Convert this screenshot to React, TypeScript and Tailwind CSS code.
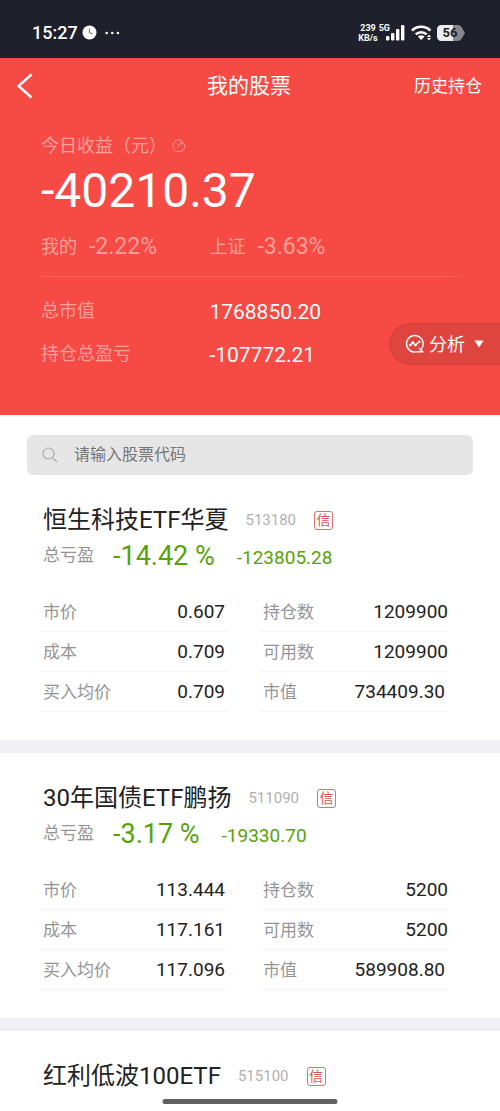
import React, { useState } from 'react';

type Holding = {
    name: string;
    code: string;
    percent?: string;
    profit?: string;
    left?: [string, string][];
    right?: [string, string][];
};

const holdings: Holding[] = [
    {
        name: '恒生科技ETF华夏',
        code: '513180',
        percent: '-14.42 %',
        profit: '-123805.28',
        left: [['市价', '0.607'], ['成本', '0.709'], ['买入均价', '0.709']],
        right: [['持仓数', '1209900'], ['可用数', '1209900'], ['市值', '734409.30']],
    },
    {
        name: '30年国债ETF鹏扬',
        code: '511090',
        percent: '-3.17 %',
        profit: '-19330.70',
        left: [['市价', '113.444'], ['成本', '117.161'], ['买入均价', '117.096']],
        right: [['持仓数', '5200'], ['可用数', '5200'], ['市值', '589908.80']],
    },
    { name: '红利低波100ETF', code: '515100' },
];

const StatusBar: React.FC = () => (
    <div className="flex h-[58px] items-center justify-between bg-[#1e212b] pt-[7px] pr-[35px] pl-8 text-white">
        <div className="flex items-center gap-2">
            <span className="text-[18px] leading-6 font-medium">15:27</span>
            <svg className="-ml-1" width="15" height="15" viewBox="0 0 15 15">
                <circle cx="7.5" cy="7.5" r="7" fill="#fff" />
                <path d="M7.3 3.6v4.2l3.3.7" fill="none" stroke="#666a74" strokeWidth="1" />
            </svg>
            <svg width="15" height="4" viewBox="0 0 15 4" fill="#fff">
                <circle cx="1.7" cy="2" r="1.3" />
                <circle cx="7.3" cy="2" r="1.3" />
                <circle cx="12.9" cy="2" r="1.3" />
            </svg>
        </div>
        <div className="flex items-center gap-[5px]">
            <div className="flex items-start">
                <div className="mr-px text-center text-[9px] leading-[10px] font-bold">
                    <div>239</div>
                    <div>KB/s</div>
                </div>
                <span className="text-[9px] leading-[10px] font-bold">5G</span>
                <svg className="-ml-1" width="20" height="20" viewBox="0 0 20 20" fill="#fff">
                    <rect x="0" y="13" width="3.4" height="4.500" rx="1" />
                    <rect x="5" y="10" width="3.4" height="7.500" rx="1" />
                    <rect x="10" y="6" width="3.4" height="11.500" rx="1" />
                    <rect x="15" y="2" width="3.4" height="15.500" rx="1" />
                </svg>
            </div>
            <svg width="21" height="16" viewBox="0 0 21 16">
                <g fill="none" stroke="#fff" strokeWidth="2.6">
                    <path d="M1 5.6a13 13 0 0 1 18.4 0" />
                    <path d="M4.7 9.4a8 8 0 0 1 11 0" />
                </g>
                <path d="M10.2 10.2a5 5 0 0 1 3.4 1.4L10.2 15l-3.4-3.4a5 5 0 0 1 3.4-1.4z" fill="#fff" />
                <path d="M16 12l2-2.4 2 2.4zM16 13l2 2.4 2-2.4z" fill="#fff" />
            </svg>
            <div className="relative h-4 w-7">
                <svg width="28" height="16" viewBox="0 0 28 16">
                    <path d="M5 0h16q2 0 3.4 2L28 8l-3.600 6q-1.400 2-3.400 2H5q-5 0-5-5V5q0-5 5-5z" fill="#85878c" />
                    <path d="M5 0h11v16H5q-5 0-5-5V5q0-5 5-5z" fill="#eceded" />
                </svg>
                <span className="absolute inset-0 pr-[2px] text-center text-[13px] leading-4 font-bold text-[#1e212b]">56</span>
            </div>
        </div>
    </div>
);

const Summary: React.FC = () => (
    <header className="relative bg-[#f64a45] pb-10 text-white">
        <div className="grid h-[55px] grid-cols-3 items-center pr-[18px] pl-4">
            <button type="button" aria-label="返回" className="justify-self-start">
                <svg width="18" height="26" viewBox="0 0 18 26" fill="none" stroke="#fff" strokeWidth="2.400">
                    <path d="M15.500 1.500L2.500 13l13 11.500" />
                </svg>
            </button>
            <h1 className="text-center text-[21px] leading-7">我的股票</h1>
            <a href="#history" className="justify-self-end text-[17px] leading-6">历史持仓</a>
        </div>

        <div className="pt-[19px] pr-[38px] pl-[41px]">
            <div className="flex h-7 items-center text-[18px] leading-7 text-[#fba09c]">
                今日收益（元）
                <svg className="ml-[5px]" width="14" height="14" viewBox="0 0 14 14" fill="none" stroke="#fba09c" strokeWidth="1">
                    <path d="M9.600 1.500A6 6 0 1 0 12.700 5.200" />
                    <path d="M5.800 8.400C6 5.800 7.600 4 10.800 3.600M9 2.200l2.300 1.300L10 5.700" />
                </svg>
            </div>
            <div className="mt-[5px] text-[48px] leading-[52px]">-40210.37</div>
            <div className="mt-4 grid grid-cols-[2fr_3fr] border-b border-[#f9605b] pb-[15px] text-[18px] leading-7 text-[#fba09c]">
                <div className="flex items-center gap-3">
                    我的<span className="text-[23px]">-2.22%</span>
                </div>
                <div className="flex items-center gap-3">
                    上证<span className="text-[23px]">-3.63%</span>
                </div>
            </div>
            <dl className="mt-3 grid grid-cols-[2fr_3fr] text-[18px] leading-[43px]">
                <dt className="text-[#fba09c]">总市值</dt>
                <dd className="pt-[3px] text-[21px] leading-10">1768850.20</dd>
                <dt className="text-[#fba09c]">持仓总盈亏</dt>
                <dd className="pt-[3px] text-[21px] leading-10">-107772.21</dd>
            </dl>
        </div>

        <button
            type="button"
            className="absolute right-0 bottom-[50px] flex h-[42px] items-center rounded-l-full border border-r-0 border-[#d2403c] bg-[#de453f] pr-4 pl-[15px] text-[18px]"
        >
            <svg width="20" height="20" viewBox="0 0 20 20" fill="none" stroke="#fff" strokeWidth="1.400" strokeLinecap="round" strokeLinejoin="round">
                <path d="M15.600 15.800A8.300 8.300 0 1 0 12.400 17.700M14.400 14.600l3.400 3.200h-5.400" />
                <path d="M5.200 11.200l2.600-2.800 2.600 2.800 3.800-3.400" />
                <g fill="#fff" strokeWidth=".8">
                    <circle cx="5.200" cy="11.200" r=".9" />
                    <circle cx="7.800" cy="8.400" r=".9" />
                    <circle cx="10.400" cy="11.200" r=".9" />
                    <circle cx="14.200" cy="7.800" r=".9" />
                </g>
            </svg>
            <span className="ml-1">分析</span>
            <svg className="ml-[9px]" width="10" height="8" viewBox="0 0 10 8" fill="#fff">
                <path d="M.5.5h9L5 7.500z" />
            </svg>
        </button>
    </header>
);

const Column: React.FC<{ rows: [string, string][] }> = ({ rows }) => (
    <dl>
        {rows.map(([label, value]) => (
            <div key={label} className="flex h-10 items-center justify-between border-b border-[#f5f5f5] pt-[2px] pl-[3px]">
                <dt className="text-[17px] text-[#959595]">{label}</dt>
                <dd className={`text-[19px] text-[#222] ${value.includes('.') ? 'pr-[3px]' : ''}`}>{value}</dd>
            </div>
        ))}
    </dl>
);

const HoldingCard: React.FC<{ item: Holding }> = ({ item }) => (
    <section className="pt-[27px]">
        <div className="flex h-9 items-center pl-[43px]">
            <h2 className="text-[24px] leading-9 text-[#222]">{item.name}</h2>
            <span className="ml-[17px] text-[15px] text-[#b0b0b0]">{item.code}</span>
            <span className="ml-[18px] flex size-[19px] items-center justify-center rounded-[3px] border border-[#dd6f70] text-[14px] leading-none text-[#d65458]">
                信
            </span>
        </div>
        {item.left && item.right && (
            <>
                <div className="flex h-9 items-center pl-[43px] text-[#57a30b]">
                    <span className="text-[17px] text-[#959595]">总亏盈</span>
                    <span className="ml-[19px] text-[27px] leading-8">{item.percent}</span>
                    <span className="mt-1 ml-[22px] text-[19px]">{item.profit}</span>
                </div>
                <div className="mt-[18px] grid grid-cols-2 gap-8 pr-[52px] pb-7 pl-10">
                    <Column rows={item.left} />
                    <Column rows={item.right} />
                </div>
                <div className="h-[13px] bg-[#efeff4]" />
            </>
        )}
    </section>
);

const App: React.FC = () => {
    const [keyword, setKeyword] = useState('');
    const list = holdings.filter(item => item.code.includes(keyword));

    return (
        <div className="min-h-screen bg-white pb-4 font-[Roboto,'Noto_Sans_CJK_SC',sans-serif]">
            <StatusBar />
            <Summary />
            <div className="px-[27px] pt-5">
                <label className="flex h-10 items-center rounded-md bg-[#e6e6e6] pl-[15px]">
                    <svg width="16" height="16" viewBox="0 0 16 16" fill="none" stroke="#ababab" strokeWidth="1.200">
                        <circle cx="6.500" cy="6.500" r="5.500" />
                        <path d="M10.600 10.600L15 15" />
                    </svg>
                    <input
                        type="text"
                        aria-label="股票代码"
                        value={keyword}
                        onChange={e => setKeyword(e.target.value)}
                        placeholder="请输入股票代码"
                        className="ml-4 min-w-0 flex-1 bg-transparent text-[16px] text-[#333] outline-none placeholder:text-[#757575]"
                    />
                </label>
            </div>
            <main>
                {list.map(item => <HoldingCard key={item.code} item={item} />)}
            </main>
            {/* Home indicator */}
            <div className="fixed bottom-[7px] left-1/2 h-[5px] w-[35%] -translate-x-1/2 rounded-full bg-[#616161]" />
        </div>
    );
};

export default App;
